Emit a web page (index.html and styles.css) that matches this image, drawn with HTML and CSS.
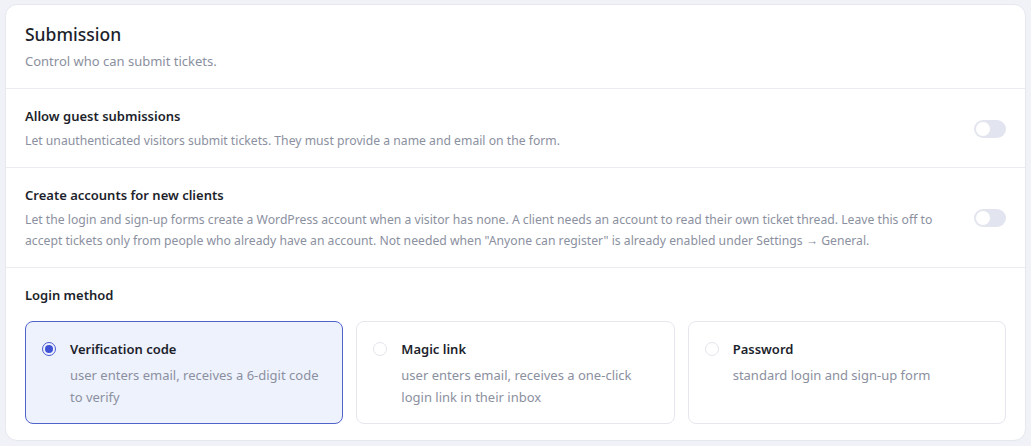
FILE: index.html
```html
<!DOCTYPE html>
<html lang="en">
<head>
  <meta charset="UTF-8">
  <meta name="viewport" content="width=device-width, initial-scale=1.0">
  <title>Submission settings</title>
  <link rel="stylesheet" href="styles.css">
</head>
<body>

  <section class="panel">
    <header class="panel-head">
      <h2>Submission</h2>
      <p>Control who can submit tickets.</p>
    </header>

    <!-- Toggle rows -->
    <div class="setting">
      <div class="setting-text">
        <h4>Allow guest submissions</h4>
        <p>Let unauthenticated visitors submit tickets. They must provide a name and email on the form.</p>
      </div>
      <label class="switch"><input type="checkbox"><span></span></label>
    </div>

    <div class="setting">
      <div class="setting-text">
        <h4>Create accounts for new clients</h4>
        <p>Let the login and sign-up forms create a WordPress account when a visitor has none. A client needs an account to read their own ticket thread. Leave this off to accept tickets only from people who already have an account. Not needed when "Anyone can register" is already enabled under Settings → General.</p>
      </div>
      <label class="switch"><input type="checkbox"><span></span></label>
    </div>

    <!-- Login method choice -->
    <div class="setting setting-block">
      <h4>Login method</h4>
      <div class="methods">
        <label class="method selected">
          <input type="radio" name="login" checked>
          <span class="dot"></span>
          <span class="method-text">
            <strong>Verification code</strong>
            <small>user enters email, receives a 6-digit code to verify</small>
          </span>
        </label>
        <label class="method">
          <input type="radio" name="login">
          <span class="dot"></span>
          <span class="method-text">
            <strong>Magic link</strong>
            <small>user enters email, receives a one-click login link in their inbox</small>
          </span>
        </label>
        <label class="method">
          <input type="radio" name="login">
          <span class="dot"></span>
          <span class="method-text">
            <strong>Password</strong>
            <small>standard login and sign-up form</small>
          </span>
        </label>
      </div>
    </div>
  </section>

</body>
</html>
```

FILE: styles.css
```css
body {
  font-family: "Noto Sans", Arial, sans-serif;
  background: #f1f1f8;
  color: #1d1f2c;
  margin: 0;
  padding: 4px 5px;
}
.panel {
  background: #ffffff;
  border: 1px solid #e6e7ef;
  border-radius: 12px;
}
.panel-head {
  padding: 16px 19px 17px;
  border-bottom: 1px solid #ebecf1;
}
.panel-head h2 {
  margin: 0;
  font-size: 17.5px;
  font-weight: 500;
  line-height: 26px;
}
.panel-head p {
  margin: 4px 0 0;
  font-size: 13px;
  line-height: 20px;
  color: #8b90a0;
}
.setting {
  display: flex;
  align-items: center;
  gap: 28px;
  padding: 17px 19px 16px;
  border-bottom: 1px solid #ebecf1;
}
.setting:last-child {
  border-bottom: none;
}
.setting-text {
  flex: 1;
}
h4 {
  margin: 0;
  font-size: 13px;
  font-weight: 600;
  line-height: 20px;
}
.setting-text p {
  margin: 4px 0 0;
  font-size: 12.2px;
  line-height: 21px;
  color: #8b90a0;
}

/* switch */
.switch input {
  display: none;
}
.switch span {
  display: block;
  width: 32px;
  height: 18px;
  border-radius: 9px;
  background: #e2e5ef;
  position: relative;
}
.switch span::after {
  content: "";
  position: absolute;
  left: 1px;
  top: 1px;
  width: 14px;
  height: 14px;
  border-radius: 50%;
  background: #fff;
  border: 1px solid #e4e6ee;
}

.setting-block {
  display: block;
}
.methods {
  display: grid;
  grid-template-columns: repeat(3, 1fr);
  gap: 13px;
  margin-top: 16px;
}
.method {
  display: flex;
  align-items: flex-start;
  gap: 14px;
  padding: 17px 16px 15px;
  border: 1px solid #e6e7ee;
  border-radius: 8px;
  cursor: pointer;
}
.method.selected {
  background: #eef2fd;
  border-color: #5163c9;
}
.method input {
  display: none;
}
.dot {
  flex: none;
  width: 12px;
  height: 12px;
  margin-top: 3px;
  border: 1px solid #e3e5ec;
  border-radius: 50%;
  background: #fff;
  position: relative;
}
.method.selected .dot {
  border-color: #4a5bd0;
  background: transparent;
}
.method.selected .dot::after {
  content: "";
  position: absolute;
  left: 2px;
  top: 2px;
  width: 8px;
  height: 8px;
  border-radius: 50%;
  background: #3f52d6;
}
.method-text strong {
  display: block;
  font-size: 13px;
  font-weight: 600;
  line-height: 20px;
}
.method-text small {
  display: block;
  margin-top: 5px;
  font-size: 13px;
  line-height: 22px;
  color: #8b90a0;
}
```
